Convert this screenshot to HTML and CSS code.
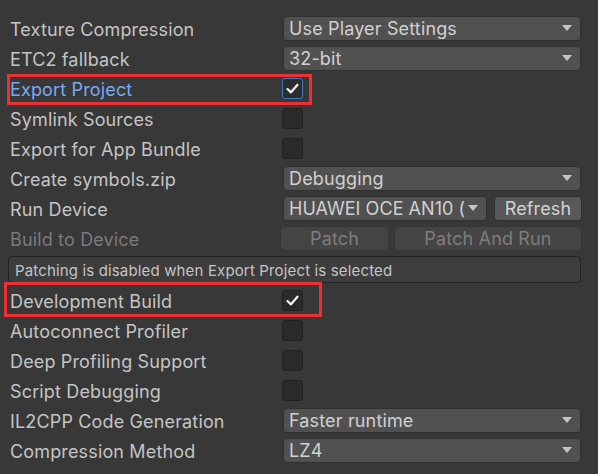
FILE: index.html
```html
<!DOCTYPE html>
<html>
<head>
<meta charset="utf-8">
<link rel="stylesheet" href="styles.css">
</head>
<body>
<div class="panel">
  <div class="row">
    <span class="label">Texture Compression</span>
    <div class="control"><div class="dropdown"><span class="dd-text">Use Player Settings</span><span class="caret"></span></div></div>
  </div>
  <div class="row">
    <span class="label">ETC2 fallback</span>
    <div class="control"><div class="dropdown"><span class="dd-text">32-bit</span><span class="caret"></span></div></div>
  </div>
  <div class="row">
    <span class="label label-blue">Export Project</span>
    <div class="control"><span class="checkbox checkbox-focus"><svg class="check" viewBox="0 0 21 21"><polyline points="5.5,11 9,14.3 15.5,6.8"/></svg></span></div>
    <span class="mark mark-export"></span>
  </div>
  <div class="row">
    <span class="label">Symlink Sources</span>
    <div class="control"><span class="checkbox"></span></div>
  </div>
  <div class="row">
    <span class="label">Export for App Bundle</span>
    <div class="control"><span class="checkbox"></span></div>
  </div>
  <div class="row">
    <span class="label">Create symbols.zip</span>
    <div class="control"><div class="dropdown"><span class="dd-text">Debugging</span><span class="caret"></span></div></div>
  </div>
  <div class="row">
    <span class="label">Run Device</span>
    <div class="control control-pair">
      <div class="dropdown dropdown-device"><span class="dd-text dd-clip">HUAWEI OCE AN10 (</span><span class="caret"></span></div>
      <div class="button">Refresh</div>
    </div>
  </div>
  <div class="row">
    <span class="label label-disabled">Build to Device</span>
    <div class="control control-pair control-wide">
      <div class="button button-disabled button-patch">Patch</div>
      <div class="button button-disabled button-run">Patch And Run</div>
    </div>
  </div>
  <div class="helpbox">Patching is disabled when Export Project is selected</div>
  <div class="row">
    <span class="label">Development Build</span>
    <div class="control"><span class="checkbox"><svg class="check" viewBox="0 0 21 21"><polyline points="5.5,11 9,14.3 15.5,6.8"/></svg></span></div>
    <span class="mark mark-dev"></span>
  </div>
  <div class="row">
    <span class="label">Autoconnect Profiler</span>
    <div class="control"><span class="checkbox"></span></div>
  </div>
  <div class="row">
    <span class="label">Deep Profiling Support</span>
    <div class="control"><span class="checkbox"></span></div>
  </div>
  <div class="row">
    <span class="label">Script Debugging</span>
    <div class="control"><span class="checkbox"></span></div>
  </div>
  <div class="row">
    <span class="label">IL2CPP Code Generation</span>
    <div class="control"><div class="dropdown"><span class="dd-text">Faster runtime</span><span class="caret"></span></div></div>
  </div>
  <div class="row">
    <span class="label">Compression Method</span>
    <div class="control"><div class="dropdown"><span class="dd-text">LZ4</span><span class="caret"></span></div></div>
  </div>
</div>
</body>
</html>
```

FILE: styles.css
```css
html, body {
  margin: 0;
  padding: 0;
  background: #383838;
  width: 598px;
  height: 474px;
  overflow: hidden;
}

.panel {
  padding: 13px 17px 0 0;
  font-family: Inter, "Noto Sans", "Liberation Sans", sans-serif;
  font-size: 18px;
  color: #c4c4c4;
}

.row {
  position: relative;
  display: grid;
  grid-template-columns: 283px 1fr;
  align-items: center;
  height: 30px;
}

.label {
  padding-left: 10px;
  padding-top: 3px;
  line-height: 22px;
  white-space: nowrap;
  letter-spacing: 0.15px;
}

.label-blue {
  color: #7ba7f0;
}

.label-disabled {
  color: #7a7a7a;
}

.control {
  display: flex;
  align-items: center;
  min-width: 0;
}

.control-pair {
  gap: 7px;
}

.control-wide {
  margin-left: -3px;
  gap: 6px;
}

.dropdown {
  flex: 1;
  display: flex;
  align-items: center;
  height: 25px;
  box-sizing: border-box;
  background: #515151;
  border: 1px solid #303030;
  border-radius: 4px;
  padding: 1px 8px 0 5px;
  color: #d0d0d0;
  min-width: 0;
  line-height: 22px;
}

.dropdown-device {
  flex: 0 0 204px;
}

.dd-text {
  flex: 1;
  white-space: nowrap;
  overflow: hidden;
  letter-spacing: 0.15px;
}

.dd-clip {
  margin-right: 3px;
  letter-spacing: 0.05px;
}

.caret {
  flex: 0 0 auto;
  width: 0;
  height: 0;
  margin-top: -1px;
  border-left: 5px solid transparent;
  border-right: 5px solid transparent;
  border-top: 6px solid #c4c4c4;
}

.button {
  flex: 1;
  height: 25px;
  box-sizing: border-box;
  display: flex;
  align-items: center;
  justify-content: center;
  padding-top: 1px;
  background: #585858;
  border: 1px solid #303030;
  border-radius: 4px;
  color: #d2d2d2;
  letter-spacing: 0.15px;
  margin-right: -1px;
  line-height: 22px;
}

.button-disabled {
  background: #444444;
  border-color: #353535;
  color: #7d7d7d;
}

.button-patch {
  flex: 0 0 109px;
}

.checkbox {
  position: relative;
  width: 21px;
  height: 21px;
  box-sizing: border-box;
  margin-left: -1px;
  background: #2a2a2a;
  border: 1px solid #212121;
  border-radius: 3px;
}

.checkbox-focus {
  border-color: #3c78c0;
  background: #2c2c2c;
}

.check {
  position: absolute;
  left: -1px;
  top: -1px;
  width: 21px;
  height: 21px;
}

.check polyline {
  fill: none;
  stroke: #eeeeee;
  stroke-width: 2.3;
  stroke-linecap: round;
  stroke-linejoin: round;
}

.helpbox {
  margin: 3px 0 2px 8px;
  height: 27px;
  box-sizing: border-box;
  display: flex;
  align-items: center;
  padding: 1px 0 0 6px;
  background: #3d3d3d;
  border: 1px solid #242424;
  border-radius: 4px;
  font-size: 15px;
  letter-spacing: 0.15px;
  color: #c4c4c4;
}

.mark {
  position: absolute;
  border: 3px solid #ee2f33;
  box-sizing: border-box;
  pointer-events: none;
}

.mark-export {
  left: 7px;
  top: 1px;
  width: 305px;
  height: 31px;
}

.mark-dev {
  left: 4px;
  top: -3px;
  width: 318px;
  height: 35px;
}
```
